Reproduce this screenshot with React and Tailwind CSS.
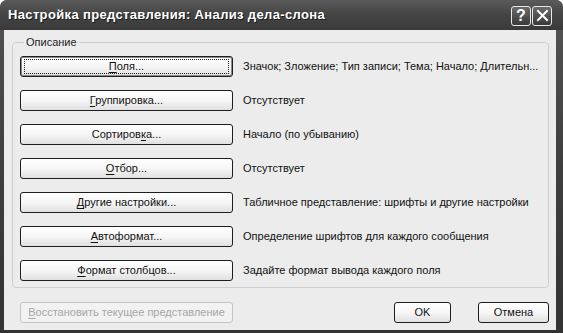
import React from 'react';

const rows = [
  { pre: '', key: 'П', post: 'оля...', desc: 'Значок; Зложение; Тип записи; Тема; Начало; Длительн...', isDefault: true },
  { pre: '', key: 'Г', post: 'руппировка...', desc: 'Отсутствует' },
  { pre: 'Сортиров', key: 'к', post: 'а...', desc: 'Начало (по убыванию)' },
  { pre: '', key: 'О', post: 'тбор...', desc: 'Отсутствует' },
  { pre: '', key: 'Д', post: 'ругие настройки...', desc: 'Табличное представление: шрифты и другие настройки' },
  { pre: '', key: 'А', post: 'втоформат...', desc: 'Определение шрифтов для каждого сообщения' },
  { pre: '', key: 'Ф', post: 'ормат столбцов...', desc: 'Задайте формат вывода каждого поля' },
];

const XpButton = ({ children, isDefault, disabled, className = '' }) => {
  if (disabled) {
    return (
      <div className={`h-[21px] flex items-center justify-center rounded-[3px] border border-[#c4c4c4] bg-[#f2f2f2] text-[#a6a6a6] ${className}`}>
        {children}
      </div>
    );
  }
  return (
    <div
      className={`h-[21px] flex items-center justify-center rounded-[3px] border border-[#1e1e1e] bg-gradient-to-b from-[#ffffff] via-[#f6f6f6] to-[#e0e0e0] text-[#111] ${isDefault ? 'shadow-[inset_0_0_0_1px_#8a8a8a]' : ''} ${className}`}
    >
      {isDefault ? (
        <div className="w-[calc(100%-6px)] h-[15px] border border-dotted border-[#222] flex items-center justify-center">
          {children}
        </div>
      ) : (
        children
      )}
    </div>
  );
};

const TitleButton = ({ children }) => (
  <div className="w-[20px] h-[20px] rounded-[3px] border border-[#e8e8e8] bg-gradient-to-b from-[#6a6a6a] to-[#3a3a3a] flex items-center justify-center">
    {children}
  </div>
);

export default function App() {
  return (
    <div
      className="w-[563px] h-[333px] flex flex-col bg-gradient-to-b from-[#555] via-[#3e3e3e] to-[#333] rounded-t-[7px] overflow-hidden"
      style={{ fontFamily: '"Liberation Sans", "DejaVu Sans", sans-serif' }}
    >
      {/* title bar */}
      <div className="h-[30px] shrink-0 flex items-center justify-between pl-[8px] pr-[11px] bg-gradient-to-b from-[#5a5a5a] via-[#444] to-[#3a3a3a]">
        <span className="text-white font-bold text-[13px] tracking-[0.35px] [text-shadow:1px_1px_0_#1a1a1a]">
          Настройка представления: Анализ дела-слона
        </span>
        <div className="flex gap-[1px] mt-[1px]">
          <TitleButton>
            <span className="text-white font-bold text-[16px] leading-none">?</span>
          </TitleButton>
          <TitleButton>
            <svg width="13" height="13" viewBox="0 0 13 13">
              <path d="M2 2 L11 11 M11 2 L2 11" stroke="#fff" strokeWidth="2" strokeLinecap="square" />
            </svg>
          </TitleButton>
        </div>
      </div>

      {/* body */}
      <div className="flex-1 ml-[4px] mr-[7px] mb-[3px] bg-[#ececec] flex flex-col pl-[8px] pr-[7px] pt-[5px] text-[11px] text-[#111]">
        <fieldset className="border border-[#cfcfcf] rounded-[4px] pl-[7px] pr-[6px] pb-[6px]">
          <legend className="ml-[4px] px-[2px] text-[#222] leading-[14px]">Описание</legend>
          <div className="flex flex-col gap-[13px] mt-[7px]">
            {rows.map((r, i) => (
              <div key={i} className="flex items-center gap-[10px]">
                <XpButton isDefault={r.isDefault} className="w-[213px] shrink-0">
                  <span>
                    {r.pre}
                    <span className="underline underline-offset-2">{r.key}</span>
                    {r.post}
                  </span>
                </XpButton>
                <span className="whitespace-nowrap">{r.desc}</span>
              </div>
            ))}
          </div>
        </fieldset>

        <div className="flex items-center mt-[14px]">
          <XpButton disabled className="w-[213px] ml-[8px]">
            <span>
              <span className="underline underline-offset-2">В</span>осстановить текущее представление
            </span>
          </XpButton>
          <div className="flex-1" />
          <XpButton className="w-[57px]">OK</XpButton>
          <XpButton className="w-[71px] ml-[27px]">Отмена</XpButton>
        </div>
      </div>
    </div>
  );
}
